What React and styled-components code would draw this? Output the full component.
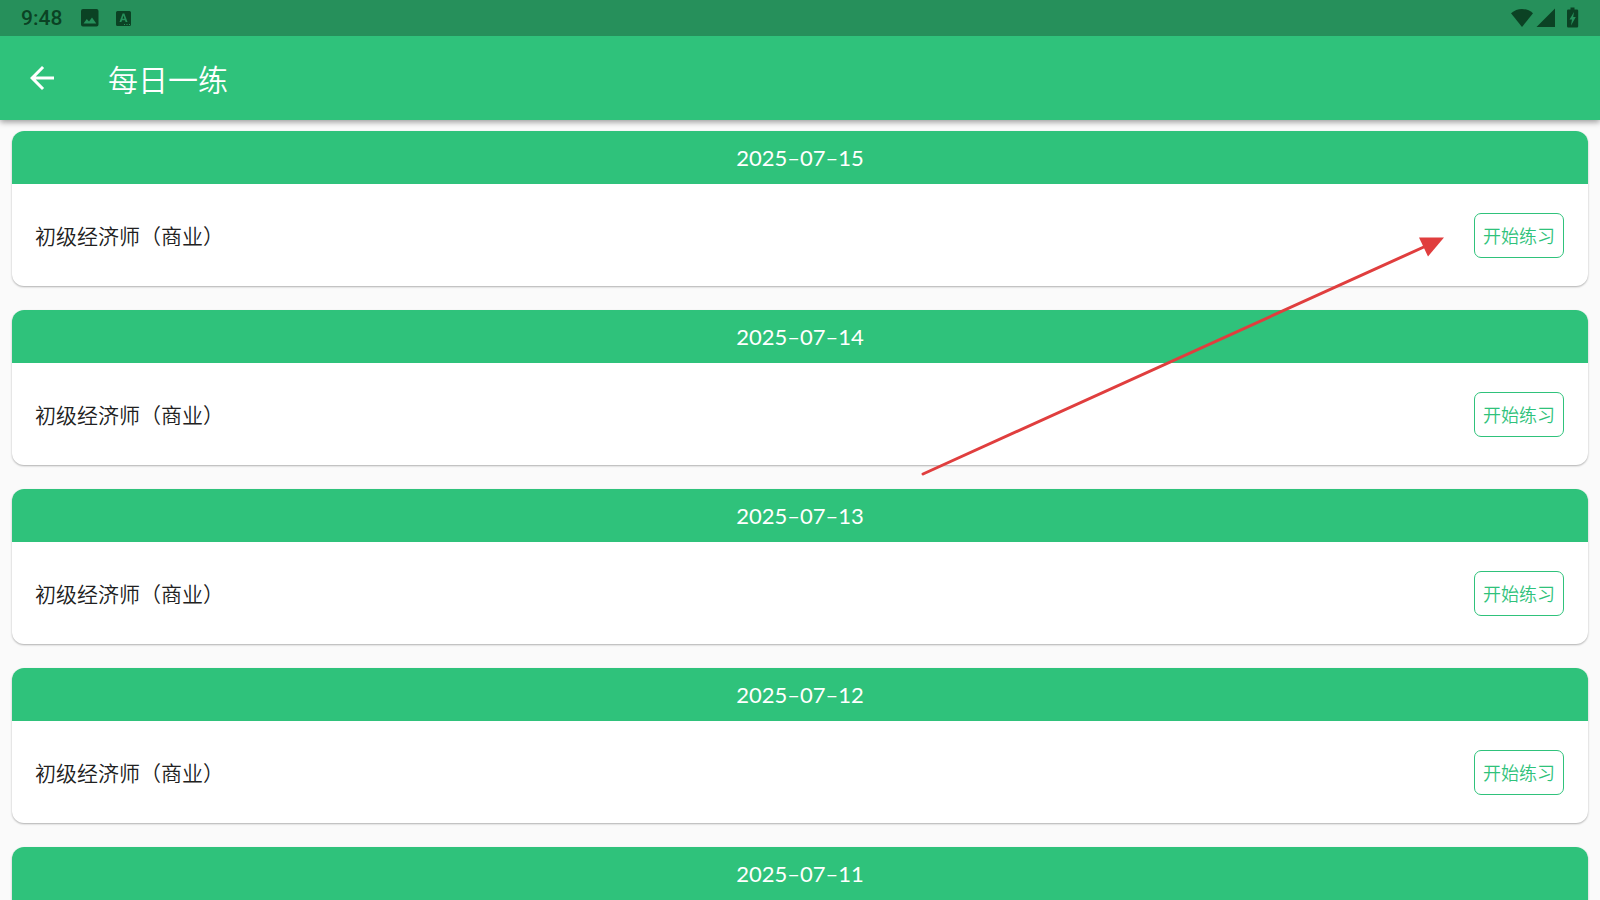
import React from "react";
import styled, { createGlobalStyle, ThemeProvider } from "styled-components";

const theme = {
  primary: "#2fc27b",
  statusBar: "#26905b",
  statusInk: "#0b4224",
  background: "#fafafa",
  text: "#212121",
  marker: "#e03e3e"
};

const GlobalStyle = createGlobalStyle`
  * {
    box-sizing: border-box;
  }

  body {
    margin: 0;
    font-family: Roboto, "Noto Sans CJK SC", sans-serif;
  }
`;

const Screen = styled.div`
  position: relative;
  display: flex;
  flex-direction: column;
  height: 100vh;
  overflow: hidden;
  background: ${props => props.theme.background};
`;

const StatusBar = styled.div`
  display: flex;
  flex-shrink: 0;
  justify-content: space-between;
  align-items: center;
  height: 36px;
  padding: 0 20px 0 21px;
  color: ${props => props.theme.statusInk};
  background: ${props => props.theme.statusBar};
  z-index: 2;
`;

const StatusGroup = styled.div`
  display: flex;
  align-items: center;
  gap: ${props => props.$gap}px;
`;

const Clock = styled.time`
  font-size: 21px;
  line-height: 36px;
  font-weight: 500;
`;

const Icon = styled.svg`
  display: block;
  flex-shrink: 0;
  fill: currentColor;
`;

const AppBar = styled.header`
  display: flex;
  flex-shrink: 0;
  align-items: center;
  gap: 48px;
  height: 84px;
  padding: 0 24px;
  color: #fff;
  background: ${props => props.theme.primary};
  box-shadow: 0 2px 6px rgba(0, 0, 0, 0.4);
  z-index: 1;
`;

const BackButton = styled.button`
  padding: 0;
  border: 0;
  color: inherit;
  background: none;
  cursor: pointer;
`;

const Title = styled.h1`
  margin: 0;
  font-family: "Noto Sans CJK SC", sans-serif;
  font-size: 30px;
  line-height: 34px;
  font-weight: 350;
`;

const List = styled.main`
  display: flex;
  flex: 1;
  flex-direction: column;
  gap: 24px;
  min-height: 0;
  padding: 11px 12px 0;
  overflow-y: auto;
  scrollbar-width: none;
`;

const CardContainer = styled.section`
  flex-shrink: 0;
  overflow: hidden;
  border-radius: 12px;
  background: #fff;
  box-shadow: 0 1px 2px rgba(0, 0, 0, 0.3);

  &:last-child {
    border-radius: 12px 12px 0 0;
  }
`;

const CardDate = styled.h2`
  margin: 0;
  font-family: Lato, sans-serif;
  font-size: 22px;
  line-height: 53px;
  font-weight: 400;
  text-align: center;
  color: #fff;
  background: ${props => props.theme.primary};
`;

const CardBody = styled.div`
  display: flex;
  justify-content: space-between;
  align-items: center;
  height: 102px;
  padding: 0 24px 0 23px;
`;

const Subject = styled.span`
  font-family: "Noto Sans CJK SC", sans-serif;
  font-size: 21px;
  line-height: 30px;
  font-weight: 350;
  color: ${props => props.theme.text};
`;

const StartButton = styled.button`
  height: 45px;
  padding: 0 8px;
  border: 1px solid ${props => props.theme.primary};
  border-radius: 7px;
  font-family: "Noto Sans CJK SC", sans-serif;
  font-size: 18px;
  line-height: 24px;
  font-weight: 350;
  color: ${props => props.theme.primary};
  background: #fff;
  cursor: pointer;
`;

const Pointer = styled.svg`
  position: absolute;
  top: 236px;
  right: 156px;
  z-index: 2;
  color: ${props => props.theme.marker};
  pointer-events: none;
`;

const days = [
  { date: "2025-07-15", subject: "初级经济师（商业）" },
  { date: "2025-07-14", subject: "初级经济师（商业）" },
  { date: "2025-07-13", subject: "初级经济师（商业）" },
  { date: "2025-07-12", subject: "初级经济师（商业）" },
  { date: "2025-07-11" }
];

const Card = ({ date, subject }) => (
  <CardContainer>
    <CardDate>{date.replace(/-/g, "–")}</CardDate>
    {subject && (
      <CardBody>
        <Subject>{subject}</Subject>
        <StartButton type="button">开始练习</StartButton>
      </CardBody>
    )}
  </CardContainer>
);

const Status = () => (
  <StatusBar>
    <StatusGroup $gap={18}>
      <Clock>9:48</Clock>
      <StatusGroup $gap={15}>
        <Icon width="20" height="20" viewBox="0 0 20 20">
          <path
            fillRule="evenodd"
            d="M3 1h13.500a2 2 0 0 1 2 2v13.500a2 2 0 0 1-2 2H3a2 2 0 0 1-2-2V3a2 2 0 0 1 2-2zM3.500 15.500h12.800l-4.300-6-3 4-2.200-2.500z"
          />
        </Icon>
        <Icon width="17" height="17" viewBox="0 0 17 17">
          <path
            fillRule="evenodd"
            d="M2.500 1h12a1.500 1.500 0 0 1 1.500 1.500v12a1.500 1.500 0 0 1-1.500 1.500h-12A1.500 1.500 0 0 1 1 14.500v-12A1.500 1.500 0 0 1 2.500 1zM7.600 3.600L4.500 12h1.900l.6-1.800h3l.6 1.800h1.900L9.400 3.600zM8.500 5.600l1 3.200h-2zM9 14v1h1v-1zM11.500 14v1h1v-1zM14 14v1h1v-1z"
          />
        </Icon>
      </StatusGroup>
    </StatusGroup>
    <StatusGroup $gap={2}>
      <Icon width="24" height="20" viewBox="0 0 24 20">
        <path d="M1 5.200C7.500-.5 16.500-.5 23 5.200L12 19z" />
      </Icon>
      <Icon width="20" height="20" viewBox="0 0 20 20">
        <path d="M19 .5V19H.5z" />
      </Icon>
      <Icon width="22" height="22" viewBox="0 0 22 22">
        <path
          fillRule="evenodd"
          d="M12.500 .5h4v2H19a1.200 1.200 0 0 1 1.200 1.200v15.600a1.200 1.200 0 0 1-1.200 1.200h-8.800A1.200 1.200 0 0 1 9 19.300V3.700A1.200 1.200 0 0 1 10.200 2.500h2.300zM16 5l-4.500 7.500h2.500l-1 6 4.800-8.500h-2.600z"
        />
      </Icon>
    </StatusGroup>
  </StatusBar>
);

const App = () => (
  <ThemeProvider theme={theme}>
    <GlobalStyle />
    <Screen>
      <Status />
      <AppBar>
        <BackButton type="button" aria-label="返回">
          <Icon width="36" height="36" viewBox="0 0 24 24">
            <path d="M20 11H7.830l5.590-5.590L12 4l-8 8 8 8 1.410-1.410L7.830 13H20v-2z" />
          </Icon>
        </BackButton>
        <Title>每日一练</Title>
      </AppBar>
      <List>
        {days.map(day => (
          <Card key={day.date} {...day} />
        ))}
      </List>
      <Pointer width="524" height="242" viewBox="0 0 524 242" aria-hidden="true">
        <path
          d="M3 238L506 10"
          stroke="currentColor"
          strokeWidth="3"
          strokeLinecap="round"
        />
        <path d="M499 1.500h25l-16 19z" fill="currentColor" />
      </Pointer>
    </Screen>
  </ThemeProvider>
);

export default App;
